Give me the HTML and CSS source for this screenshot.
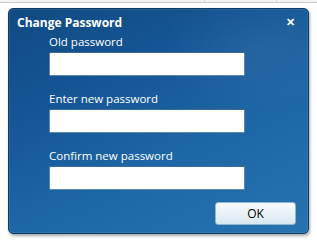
FILE: index.html
```html
<!DOCTYPE html>
<html>
<head>
<meta charset="utf-8">
<link rel="stylesheet" href="styles.css">
</head>
<body>
<div class="strip"><span class="cell c1"></span><span class="cell c2"></span><span class="cell c3"></span></div>
<div class="dialog">
  <div class="titlebar">
    <span class="title">Change Password</span>
    <span class="close">✕</span>
  </div>
  <div class="form">
    <div class="field">
      <label class="label">Old password</label>
      <input class="input" type="password">
    </div>
    <div class="field">
      <label class="label">Enter new password</label>
      <input class="input" type="password">
    </div>
    <div class="field">
      <label class="label">Confirm new password</label>
      <input class="input" type="password">
    </div>
  </div>
  <div class="actions">
    <button class="btn">OK</button>
  </div>
</div>
</body>
</html>
```
FILE: styles.css
```css
html, body {
  margin: 0;
  padding: 0;
  background: #ffffff;
  width: 317px;
  height: 244px;
  overflow: hidden;
  font-family: "Open Sans", "Noto Sans", sans-serif;
}
.strip {
  display: flex;
  height: 2px;
  border-bottom: 1px solid #c9c9c9;
  background: #f3f3f3;
}
.cell { display: block; height: 2px; border-right: 1px solid #d6d6d6; }
.c1 { width: 204px; }
.c2 { width: 71px; }
.c3 { flex: 1; border-right: none; }
.dialog {
  margin: 5px 0 0 8px;
  width: 301px;
  height: 226px;
  box-sizing: border-box;
  border: 1px solid #0c3b66;
  border-radius: 5px;
  background:
    radial-gradient(ellipse 140px 90px at 250px 40px, rgba(255,255,255,0.05), rgba(255,255,255,0) 70%),
    linear-gradient(155deg, #104a82 0%, #155594 30%, #1d66a5 60%, #2673b0 100%);
  box-shadow: 1px 2px 3px rgba(0,0,0,0.35), inset 0 0 0 1px rgba(255,255,255,0.08);
  display: flex;
  flex-direction: column;
  color: #ffffff;
}
.titlebar {
  display: flex;
  justify-content: space-between;
  align-items: center;
  padding: 3px 13px 0 8px;
  height: 20px;
}
.title {
  font-weight: bold;
  font-size: 12px;
}
.close {
  font-size: 11px;
  font-weight: bold;
  line-height: 12px;
}
.form {
  display: flex;
  flex-direction: column;
  gap: 15px;
  padding-left: 40px;
  margin-top: 2px;
}
.field {
  display: flex;
  flex-direction: column;
  gap: 2px;
}
.label {
  font-size: 11.5px;
  line-height: 16px;
  color: #ffffff;
}
.input {
  width: 196px;
  height: 24px;
  box-sizing: border-box;
  margin: 0;
  border: 1px solid #5f88ad;
  border-top-color: #3d6b95;
  border-radius: 2px;
  background: #ffffff;
  outline: none;
}
.actions {
  display: flex;
  justify-content: flex-end;
  padding: 0 12px 0 0;
  margin-top: auto;
  margin-bottom: 8px;
}
.btn {
  width: 81px;
  height: 23px;
  box-sizing: border-box;
  border: 1px solid #8fb6d2;
  border-radius: 3px;
  background: linear-gradient(#f6fafc 0%, #e9f2f7 50%, #d7e8f1 100%);
  font-family: "Open Sans", "Noto Sans", sans-serif;
  font-size: 12px;
  color: #000000;
  padding: 0;
}
```
